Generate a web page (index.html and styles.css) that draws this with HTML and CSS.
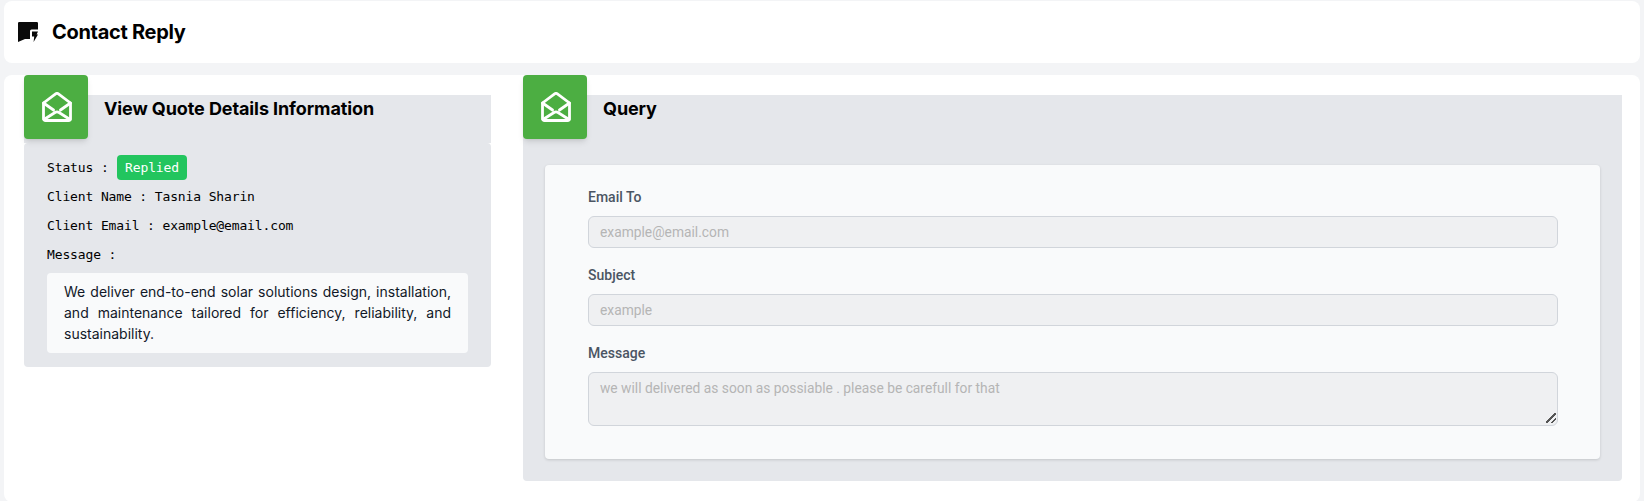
FILE: index.html
```html
<!DOCTYPE html>
<html lang="en">
<head>
<meta charset="utf-8">
<title>Contact Reply</title>
<link rel="stylesheet" href="styles.css">
</head>
<body>
<header class="topbar">
  <svg class="topbar-icon" viewBox="0 0 20 20" width="20" height="20" aria-hidden="true">
    <path fill="#0a0a0a" d="M1.2 0H18.8A1.2 1.2 0 0 1 20 1.2V7.5H13.5A1.5 1.5 0 0 0 12 9V17H7L0 20V1.2A1.2 1.2 0 0 1 1.2 0Z"/>
    <path fill="#0a0a0a" d="M14 9.5H20L18.6 12.5H20L15.6 20L16.2 14.5H14Z"/>
  </svg>
  <h1 class="topbar-title">Contact Reply</h1>
</header>
<main class="content">
  <section class="panel panel-left">
    <div class="badge-icon">
      <svg viewBox="0 0 30 30" width="30" height="30" fill="none" stroke="#fff" stroke-width="2.8" stroke-linecap="round" stroke-linejoin="round" aria-hidden="true">
        <path d="M1.5 11L13.6 1.9a2.4 2.4 0 0 1 2.8 0L28.5 11V26.5a2 2 0 0 1-2 2H3.5a2 2 0 0 1-2-2Z"/>
        <path d="M1.5 11L11.5 18M28.5 11L18.5 18M2 27.5L13 20.5a3.8 3.8 0 0 1 4 0L28 27.5"/>
      </svg>
    </div>
    <div class="panel-head"><h2 class="panel-title">View Quote Details Information</h2></div>
    <div class="details">
      <p class="detail status-row">Status : <span class="status">Replied</span></p>
      <p class="detail">Client Name : Tasnia Sharin</p>
      <p class="detail">Client Email : example@email.com</p>
      <p class="detail">Message :</p>
      <div class="message">We deliver end-to-end solar solutions design, installation, and maintenance tailored for efficiency, reliability, and sustainability.</div>
    </div>
  </section>
  <section class="panel panel-right">
    <div class="badge-icon">
      <svg viewBox="0 0 30 30" width="30" height="30" fill="none" stroke="#fff" stroke-width="2.8" stroke-linecap="round" stroke-linejoin="round" aria-hidden="true">
        <path d="M1.5 11L13.6 1.9a2.4 2.4 0 0 1 2.8 0L28.5 11V26.5a2 2 0 0 1-2 2H3.5a2 2 0 0 1-2-2Z"/>
        <path d="M1.5 11L11.5 18M28.5 11L18.5 18M2 27.5L13 20.5a3.8 3.8 0 0 1 4 0L28 27.5"/>
      </svg>
    </div>
    <div class="panel-head"><h2 class="panel-title">Query</h2></div>
    <form class="form">
      <label class="field">
        <span class="field-label">Email To</span>
        <input class="control" type="text" placeholder="example@email.com" disabled>
      </label>
      <label class="field">
        <span class="field-label">Subject</span>
        <input class="control" type="text" placeholder="example" disabled>
      </label>
      <label class="field">
        <span class="field-label">Message</span>
        <textarea class="control control-area" placeholder="we will delivered as soon as possiable . please be carefull for that" disabled></textarea>
      </label>
    </form>
  </section>
</main>
</body>
</html>
```
FILE: styles.css
```css
* { box-sizing: border-box; }
html, body { height: 100%; }
body {
  margin: 0;
  padding: 1px 4px 0;
  background: #f3f4f6;
  font-family: Inter, "Liberation Sans", sans-serif;
  color: #000;
  overflow: hidden;
}
.topbar {
  display: flex;
  align-items: center;
  gap: 14px;
  height: 62px;
  padding: 0 14px;
  background: #fff;
  border-radius: 8px;
}
.topbar-icon { flex: none; }
.topbar-title {
  margin: 0;
  font-size: 20px;
  line-height: 28px;
  font-weight: 650;
  letter-spacing: -0.3px;
}
.content {
  display: flex;
  align-items: flex-start;
  gap: 32px;
  height: 427px;
  margin-top: 12px;
  padding: 20px 18px 0 20px;
  background: #fff;
  border-radius: 8px;
}
.panel { position: relative; }
.panel-left { flex: 0 0 467px; }
.panel-right {
  flex: 1;
  height: 386px;
  background: #e5e7eb;
  border-radius: 4px;
}
.badge-icon {
  position: absolute;
  left: 0;
  top: -20px;
  display: flex;
  align-items: center;
  justify-content: center;
  width: 64px;
  height: 64px;
  background: #4cae42;
  border-radius: 4px;
  box-shadow: 0 4px 6px -1px rgba(0, 0, 0, .1), 0 2px 4px -2px rgba(0, 0, 0, .1);
}
.badge-icon svg { margin-left: 2px; }
.panel-head {
  height: 48px;
  padding: 0 0 0 80px;
  background: #e5e7eb;
}
.panel-title {
  margin: 0;
  font-size: 18px;
  line-height: 28px;
  font-weight: 650;
  letter-spacing: -0.1px;
}
.details {
  padding: 12px 23px 14px;
  background: #e5e7eb;
  border-radius: 4px;
}
.detail {
  margin: 0 0 9px;
  font-family: "DejaVu Sans Mono", monospace;
  font-size: 13px;
  letter-spacing: -0.13px;
  line-height: 20px;
  color: #000;
}
.status-row { display: flex; align-items: center; gap: 8px; height: 25px; margin-bottom: 7px; }
.status {
  display: inline-block;
  height: 25px;
  padding: 0 8.5px;
  line-height: 25px;
  color: #fff;
  background: #22c55e;
  border-radius: 4px;
}
.message {
  padding: 8px 17px 9px;
  margin-top: -1px;
  font-size: 14px;
  line-height: 21px;
  text-align: justify;
  color: #111827;
  background: #f9fafb;
  border-radius: 4px;
}
.form {
  display: flex;
  flex-direction: column;
  gap: 17px;
  margin: 22px 22px 0;
  height: 294px;
  padding: 22px 42px 0 43px;
  background: #f9fafb;
  border-radius: 4px;
  box-shadow: 0 1px 3px rgba(0, 0, 0, .15);
}
.field { display: block; }
.field-label {
  display: block;
  margin-bottom: 9px;
  font-family: Roboto, "Noto Sans", sans-serif;
  font-size: 14px;
  line-height: 20px;
  font-weight: 500;
  color: #4b5563;
}
.control {
  display: block;
  width: 100%;
  height: 32px;
  padding: 0 11px;
  font-family: Roboto, "Noto Sans", sans-serif;
  font-size: 13.8px;
  background: #eff0f2;
  border: 1px solid #d1d5db;
  border-radius: 6px;
  outline: none;
}
.control::placeholder { color: #b5b5b5; opacity: 1; }
.control-area {
  height: 54px;
  padding: 5px 11px 4px;
  line-height: 20px;
  resize: vertical;
}
.control-area::-webkit-resizer {
  background: linear-gradient(135deg, transparent 0 44%, #555 44% 56%, transparent 56% 70%, #555 70% 82%, transparent 82%) right 1px bottom 2px / 10px 10px no-repeat;
}
```
